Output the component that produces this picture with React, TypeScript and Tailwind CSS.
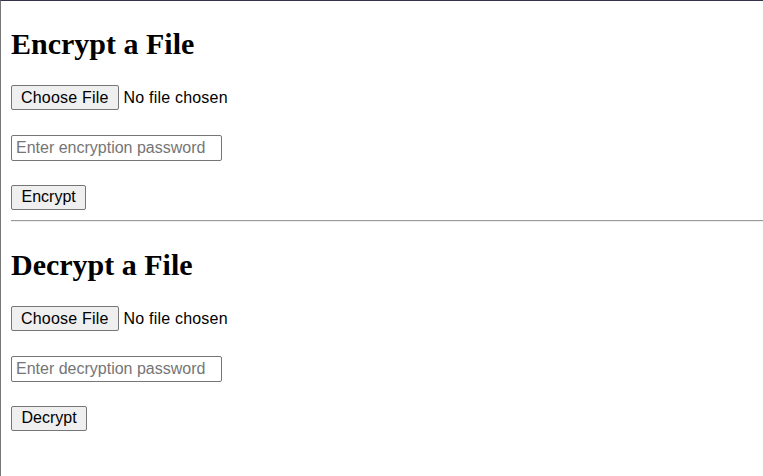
export default function App() {
  const section = (title: string, placeholder: string, action: string) => (
    <section>
      <h1 className="mt-[24px] font-['Liberation_Serif',serif] text-[30px] font-bold leading-[37px] text-black">
        {title}
      </h1>
      <div className="mt-[23px] h-[25px]">
        <input
          type="file"
          className="h-[25px] font-['Liberation_Sans',Arial,sans-serif] text-[16px] tracking-[0.2px] text-black file:mr-[5px] file:h-[25px] file:rounded-[2px] file:border file:border-solid file:border-[#767676] file:bg-[#efefef] file:px-[9px] file:tracking-[0.2px] file:text-black"
        />
      </div>
      <div className="mt-[25px] h-[26px]">
        <input
          type="password"
          placeholder={placeholder}
          className="h-[26px] w-[211px] rounded-[2px] border border-[#767676] bg-white px-[4px] font-['Liberation_Sans',Arial,sans-serif] text-[16px] text-black placeholder:text-[#757575] focus:outline-none"
        />
      </div>
      <div className="mt-[23px] h-[25px]">
        <button className="h-[25px] rounded-[2px] border border-[#767676] bg-[#efefef] px-[9.5px] font-['Liberation_Sans',Arial,sans-serif] text-[16px] leading-none text-black">
          {action}
        </button>
      </div>
    </section>
  )

  return (
    <div className="min-h-screen border-l border-t border-l-[#777777] border-t-[#33334a] bg-white pl-[10px]">
      {section('Encrypt a File', 'Enter encryption password', 'Encrypt')}
      <hr className="mt-[11px] border-0 border-t border-b border-t-[#9a9a9a] border-b-[#eeeeee]" />
      {section('Decrypt a File', 'Enter decryption password', 'Decrypt')}
    </div>
  )
}
